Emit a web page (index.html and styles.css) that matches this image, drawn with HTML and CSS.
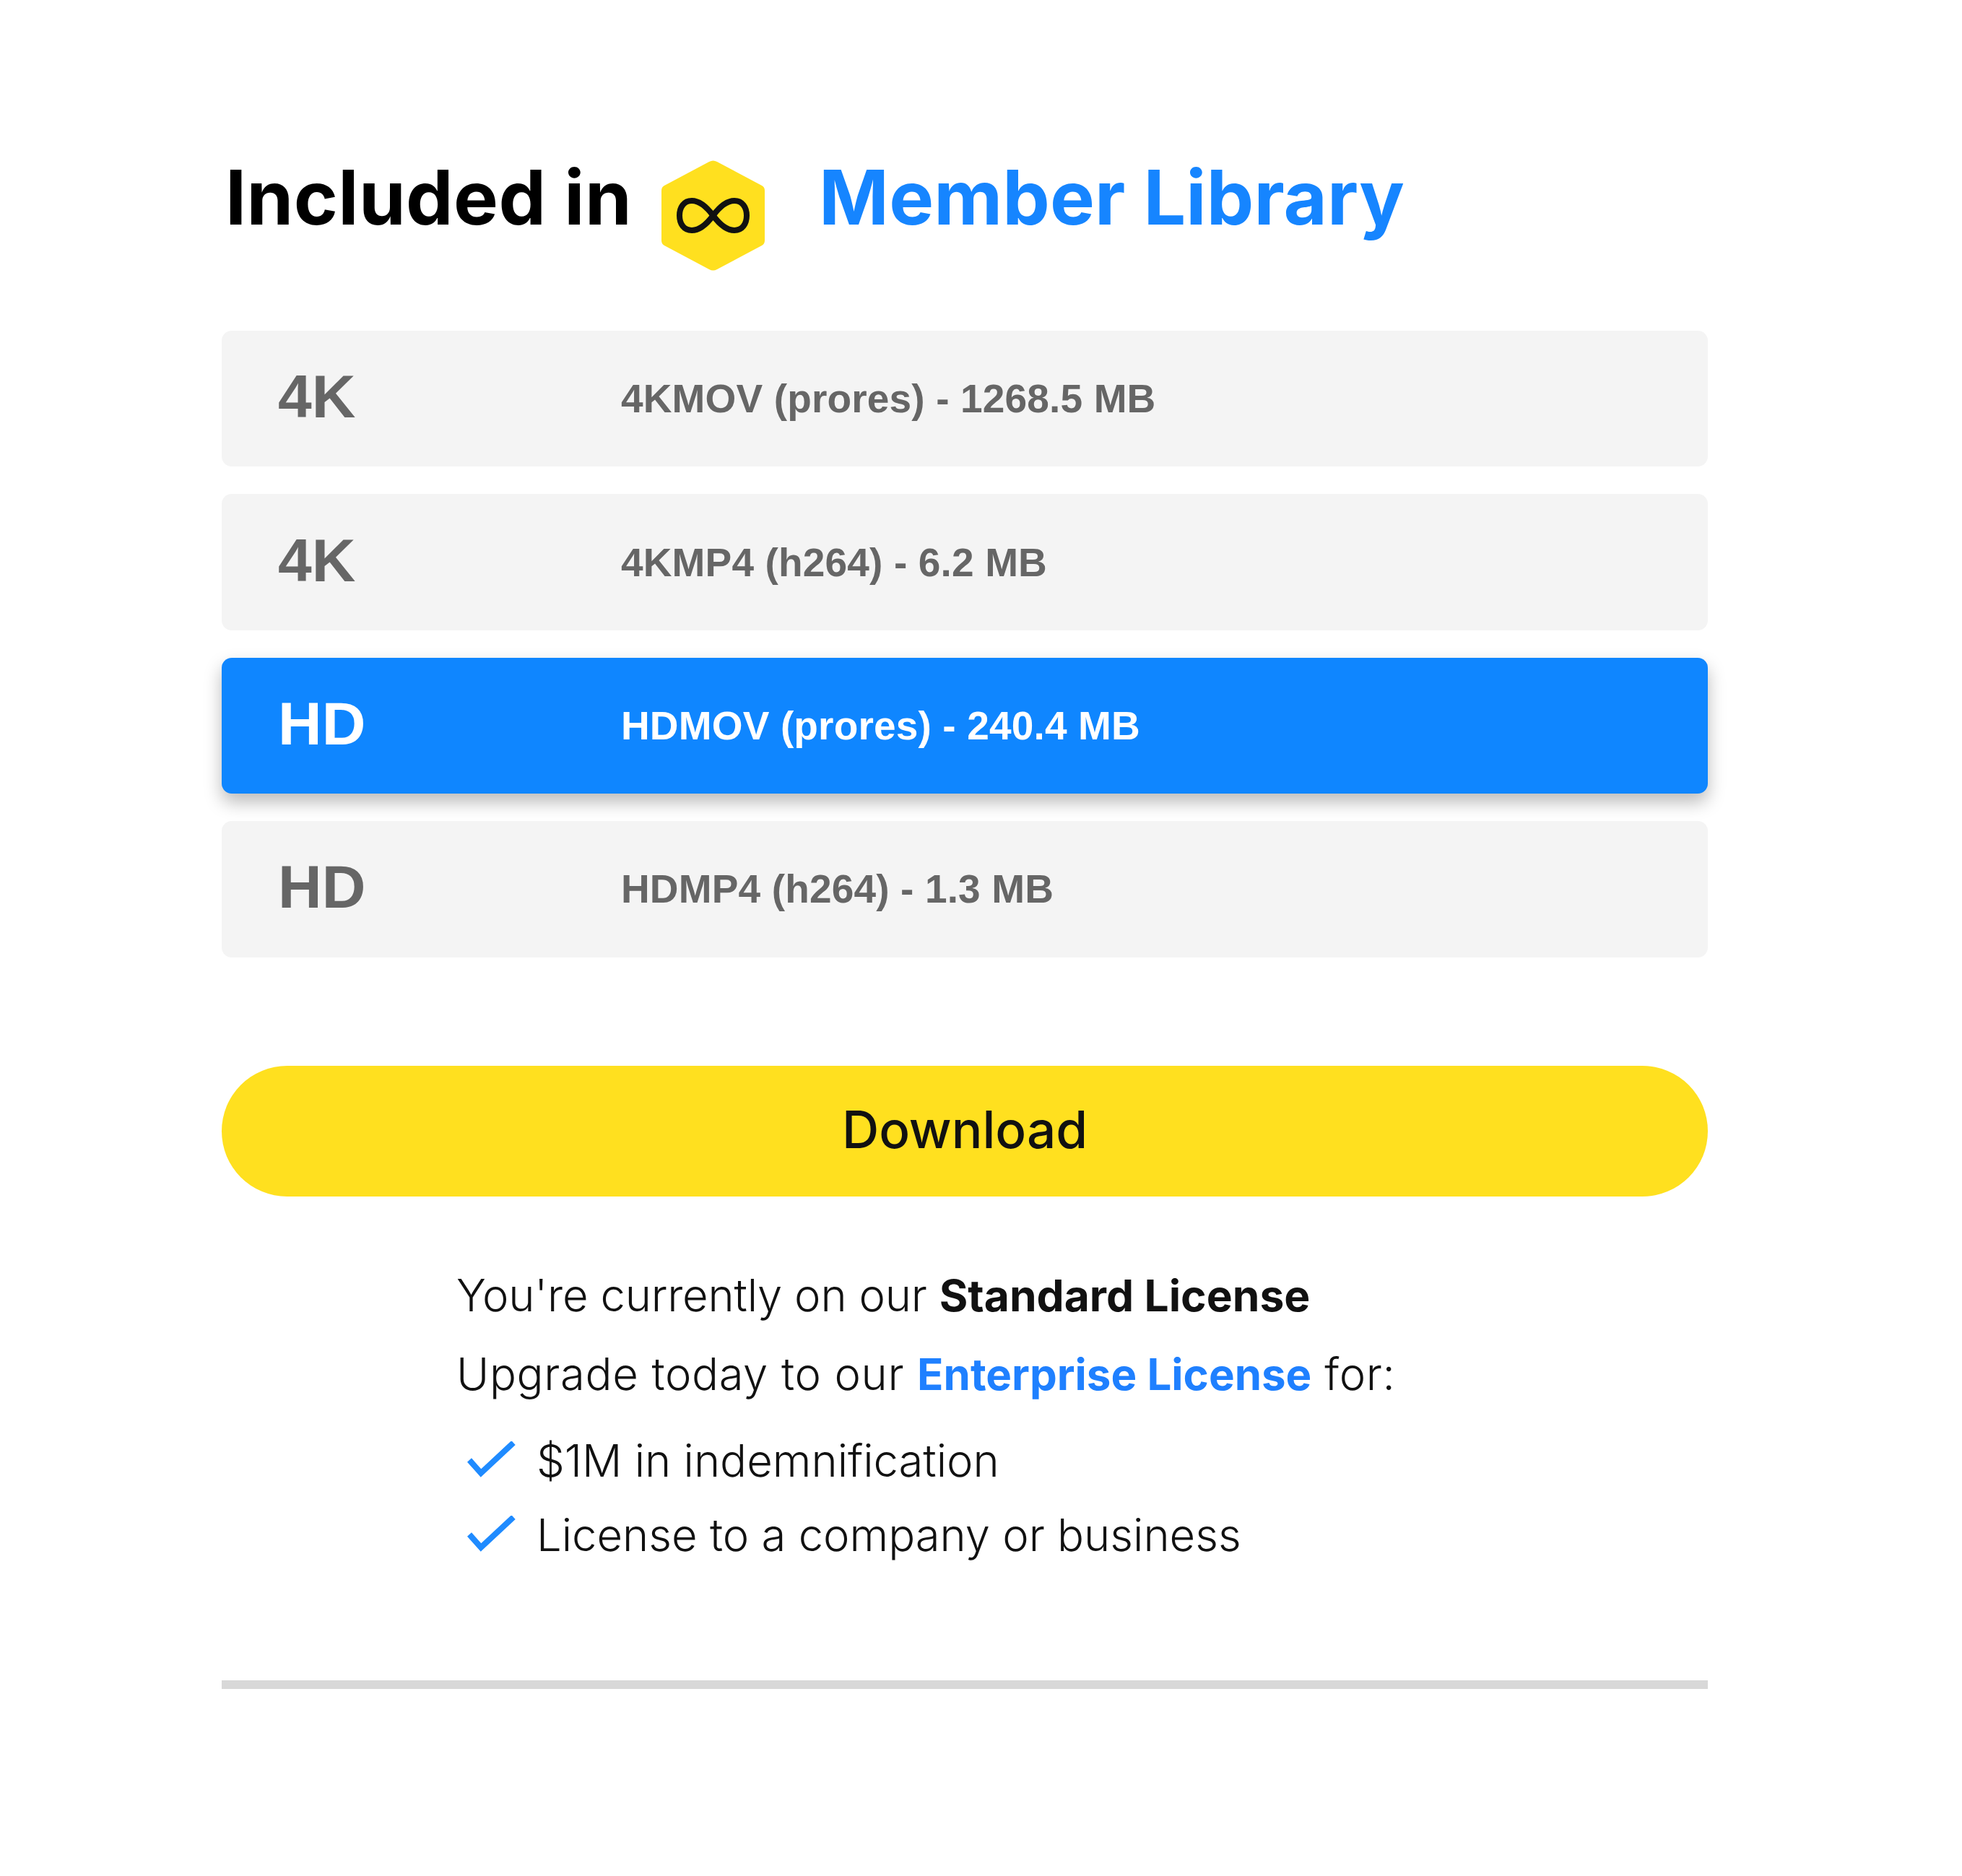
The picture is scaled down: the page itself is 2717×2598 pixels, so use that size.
FILE: index.html
```html
<!DOCTYPE html>
<html lang="en">
<head>
<meta charset="utf-8">
<title>Download</title>
<link rel="stylesheet" href="styles.css">
</head>
<body>
<main class="panel">
  <h1 class="heading">
    <span class="heading-text">Included in</span>
    <svg class="hex" viewBox="0 0 143 155" aria-hidden="true">
      <path d="M66 3 Q71.500 0 77 3 L139 36 Q143 38 143 43 L143 112 Q143 117 139 119 L77 152 Q71.500 155 66 152 L4 119 Q0 117 0 112 L0 43 Q0 38 4 36 Z" fill="#ffe01f"/>
      <path d="M71.500 77.500 C60 62 50 57 42 57 C31 57 25 66 25 77.500 C25 89 31 98 42 98 C50 98 60 93 71.500 77.500 C83 62 93 57 101 57 C112 57 118 66 118 77.500 C118 89 112 98 101 98 C93 98 83 93 71.500 77.500 Z" fill="none" stroke="#111" stroke-width="8"/>
    </svg>
    <a class="heading-text heading-link">Member Library</a>
  </h1>
  <div class="rows">
    <div class="row"><span class="res">4K</span><span class="file">4KMOV (prores) - 1268.5 MB</span></div>
    <div class="row"><span class="res">4K</span><span class="file">4KMP4 (h264) - 6.2 MB</span></div>
    <div class="row active"><span class="res">HD</span><span class="file">HDMOV (prores) - 240.4 MB</span></div>
    <div class="row"><span class="res">HD</span><span class="file">HDMP4 (h264) - 1.3 MB</span></div>
  </div>
  <button class="download">Download</button>
  <div class="license">
    <p class="line line-current">You're currently on our <strong>Standard License</strong></p>
    <p class="line line-upgrade">Upgrade today to our <a class="link">Enterprise License</a> for:</p>
    <ul class="perks">
      <li class="perk"><svg class="check" viewBox="0 0 70 50" aria-hidden="true"><path d="M5 26 L21 44 L66 2" fill="none" stroke="#1f8bff" stroke-width="8"/></svg><span>$1M in indemnification</span></li>
      <li class="perk"><svg class="check" viewBox="0 0 70 50" aria-hidden="true"><path d="M5 26 L21 44 L66 2" fill="none" stroke="#1f8bff" stroke-width="8"/></svg><span>License to a company or business</span></li>
    </ul>
  </div>
  <hr class="rule">
</main>
</body>
</html>
```
FILE: styles.css
```css
* { box-sizing: border-box; }
html, body { margin: 0; background: #fff; }
body { height: 2598px; overflow: hidden; font-family: "Inter", "Liberation Sans", sans-serif; color: #111; }
.panel { width: 2058px; margin-left: 307px; padding-top: 221px; }
.heading { display: flex; align-items: center; height: 155px; margin: 0 0 82px; padding-left: 5px; font-size: 104px; font-weight: 700; letter-spacing: 0.400px; color: #000; line-height: 1; }
.heading-text { padding-bottom: 52px; }
.hex { width: 143px; height: 155px; margin-left: 41px; flex: none; }
.heading-link { margin-left: 75px; letter-spacing: 0.150px; color: #1685ff; }
.rows { display: flex; flex-direction: column; gap: 38px; }
.row { display: flex; align-items: center; height: 188.400px; padding-left: 78px; background: #f4f4f4; border-radius: 14px; color: #666; font-family: "Liberation Sans", Arial, sans-serif; font-weight: 700; }
.row.active { background: #0f86ff; color: #fff; box-shadow: 0 12px 25px rgba(0, 0, 0, 0.27); }
.res { width: 475px; flex: none; padding-bottom: 5px; font-size: 84px; }
.file { font-size: 55px; letter-spacing: 0.150px; }
.download { display: block; width: 100%; height: 181px; margin-top: 150px; padding-bottom: 6px; border: 0; border-radius: 91px; background: #ffe01f; color: #111; font-family: "Inter", sans-serif; font-size: 71px; font-weight: 500; }
.license { margin: 0 0 0 325px; padding-top: 101px; font-size: 61.500px; font-weight: 300; }
.line { margin: 0; height: 109px; line-height: 72px; }
.line-current { letter-spacing: -0.200px; }
.line-upgrade { letter-spacing: 0.650px; }
.line strong { font-size: 60.500px; font-weight: 700; letter-spacing: 0; }
.link { font-size: 60px; color: #1f80ff; font-weight: 700; letter-spacing: 0; }
.perks { list-style: none; margin: -5px 0 0; padding: 0; }
.perk { display: flex; align-items: center; height: 103px; }
.check { width: 70px; height: 50px; margin: 0 28px 3px 13px; flex: none; }
.rule { height: 12px; margin: 150px 0 0; border: 0; background: #d8d8d8; }
```
